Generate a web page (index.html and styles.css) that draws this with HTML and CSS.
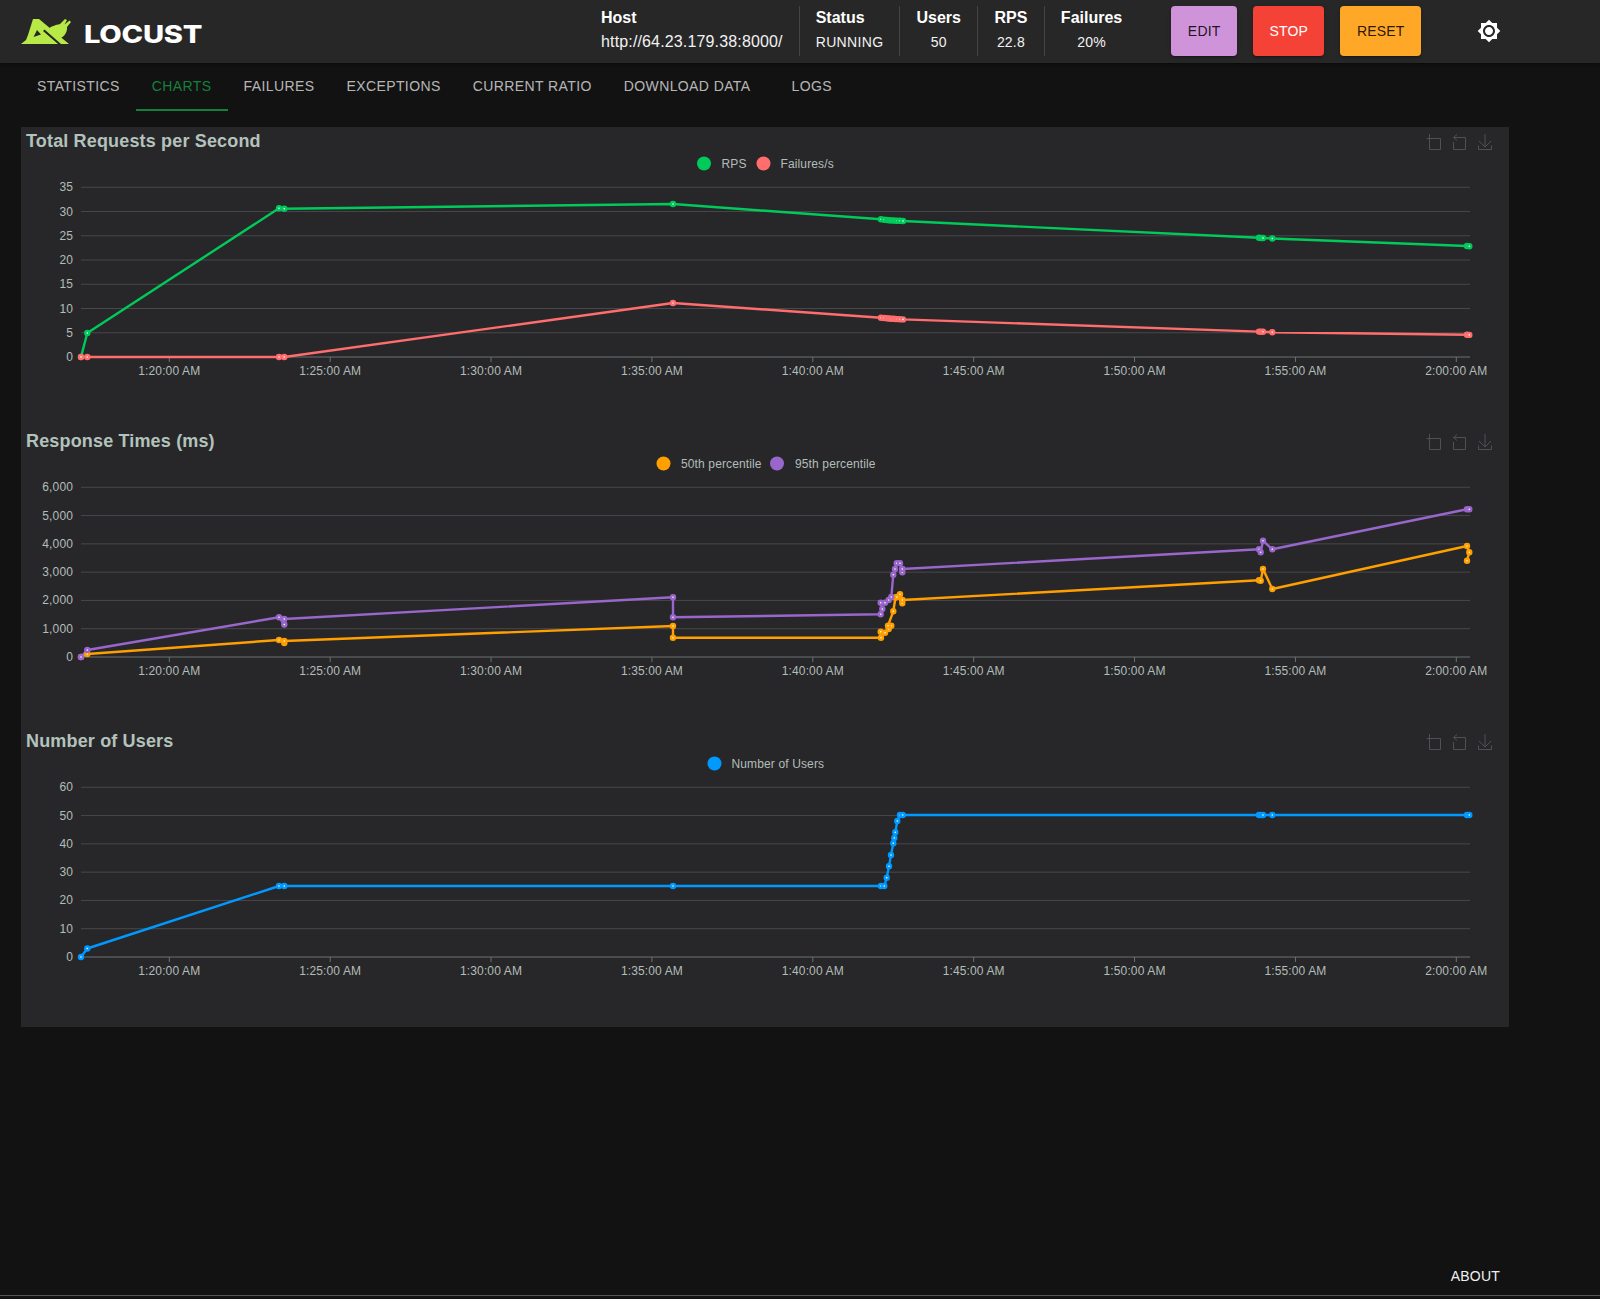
FILE: index.html
```html
<!DOCTYPE html>
<html lang="en">
<head>
<meta charset="utf-8">
<title>Locust</title>
<link rel="stylesheet" href="styles.css">
</head>
<body>
<header class="topbar">
  <a class="brand">
    <svg class="brand-mark" viewBox="18 14 60 34" width="60" height="34">
      <path class="mark" fill-rule="evenodd" d="M33 19H39L69 44H21L26 40 28 35ZM37 30 33.5 37 41 34.5ZM43 31 58 44H61L44.5 29.5Z"/>
      <path class="mark" d="M47 30C51 26 56 25 60 24L65 19 67 20 64.5 24.5 69.5 20.5 71 22 67 27C67.5 31 65 36 61 38Z"/>
    </svg>
    <span class="brand-name">LOCUST</span>
  </a>
  <div class="stats">
    <div class="stat stat-host"><b>Host</b><span class="host-url">http://64.23.179.38:8000/</span></div>
    <div class="stat stat-status"><b>Status</b><span>RUNNING</span></div>
    <div class="stat"><b>Users</b><span>50</span></div>
    <div class="stat stat-rps"><b>RPS</b><span>22.8</span></div>
    <div class="stat stat-last"><b>Failures</b><span>20%</span></div>
  </div>
  <div class="actions">
    <button class="btn btn-edit">EDIT</button>
    <button class="btn btn-stop">STOP</button>
    <button class="btn btn-reset">RESET</button>
  </div>
  <svg class="theme" viewBox="0 0 24 24" width="24" height="24"><path d="M20 8.69V4h-4.69L12 .69 8.69 4H4v4.69L.69 12 4 15.31V20h4.69L12 23.31 15.31 20H20v-4.69L23.31 12 20 8.69zM12 18c-3.31 0-6-2.69-6-6s2.69-6 6-6 6 2.69 6 6-2.69 6-6 6zm0-10c-2.21 0-4 1.79-4 4s1.79 4 4 4 4-1.79 4-4-1.79-4-4-4z"/></svg>
</header>
<nav class="tabs">
  <a class="tab">STATISTICS</a>
  <a class="tab tab-active">CHARTS</a>
  <a class="tab">FAILURES</a>
  <a class="tab">EXCEPTIONS</a>
  <a class="tab">CURRENT RATIO</a>
  <a class="tab">DOWNLOAD DATA</a>
  <a class="tab tab-logs">LOGS</a>
</nav>
<main class="main">
  <section class="panel" id="panel"></section>
</main>
<footer class="footer"><a class="about">ABOUT</a></footer>
<script src="charts.js"></script>
</body>
</html>
```
FILE: styles.css
```css
* { box-sizing: border-box; }
html, body { margin: 0; height: 100%; }
body {
  display: flex;
  flex-direction: column;
  min-height: 1299px;
  background: #121212;
  color: #fff;
  font-family: "Liberation Sans", Arial, sans-serif;
  font-size: 14px;
}
.topbar {
  display: flex;
  align-items: center;
  height: 63px;
  flex: none;
  padding-bottom: 1px;
  background: #272727;
  box-shadow: 0 1px 3px rgba(0,0,0,.5);
}
.brand { display: flex; align-items: center; width: 601px; padding: 7px 0 0 18px; }
.brand-mark { display: block; flex: none; margin-top: -7px; }
.brand-name {
  margin-left: 6px;
  font-family: Inter, "Liberation Sans", sans-serif;
  font-weight: 800;
  font-size: 24px;
  letter-spacing: -.2px;
  transform: scaleX(1.21);
  transform-origin: left center;
}
.stats { display: flex; height: 50px; }
.stat {
  display: flex;
  flex-direction: column;
  align-items: center;
  gap: 4px;
  padding: 2px 16px 0;
  border-right: 1px solid #444;
}
.stat b { font-size: 16px; line-height: 20px; }
.stat span { font-size: 14px; line-height: 20px; letter-spacing: .2px; color: #f2f2f2; }
.stat-host { align-items: flex-start; padding-left: 0; }
.stat-status { align-items: flex-start; }
.stat-status span { letter-spacing: .35px; }
.stat-rps { padding: 2px 16.5px 0; }
.stat-last { border-right: 0; }
.stat .host-url { font-size: 16px; letter-spacing: .15px; }
.actions { display: flex; gap: 16px; margin-left: 33px; }
.btn {
  height: 50px;
  padding: 0 16px;
  border: 0;
  border-radius: 4px;
  font: 14px "Liberation Sans", Arial, sans-serif;
  letter-spacing: .2px;
  color: rgba(0,0,0,.87);
  box-shadow: 0 3px 1px -2px rgba(0,0,0,.2), 0 2px 2px rgba(0,0,0,.14), 0 1px 5px rgba(0,0,0,.12);
}
.btn-edit { width: 66px; background: #ce93d8; }
.btn-stop { width: 71px; background: #f44336; color: #fff; }
.btn-reset { width: 81px; background: #ffa726; }
.theme { margin-left: 56px; fill: #fff; flex: none; }
.tabs { display: flex; flex: none; height: 48px; padding-left: 21px; }
.tab {
  display: flex;
  align-items: center;
  padding: 0 16px;
  letter-spacing: .4px;
  color: rgba(255,255,255,.7);
  border-bottom: 2px solid transparent;
}
.tab-active { color: #15803d; border-bottom-color: #15803d; }
.tab-logs { margin-left: 9px; }
.main { flex: 1; padding: 16px 0 0 21px; }
.panel { width: 1488px; background: #27272a; }
.chart { display: block; width: 1488px; height: 300px; }
.chart text { font-family: "Liberation Sans", Arial, sans-serif; font-size: 12px; letter-spacing: .13px; fill: #b3bdb8; }
.chart .title { font-size: 18px; font-weight: 700; letter-spacing: .16px; fill: #b3c3bc; }
.chart .grid { stroke: #48484c; stroke-width: 1; }
.chart .axis { stroke: #6a726e; stroke-width: 1; }
.chart .tool { fill: none; stroke: #505054; stroke-width: 1; }
.chart .line { fill: none; stroke-width: 2.4; stroke-linejoin: round; }
.chart .dot { fill: #fff; stroke-width: 2.4; }
.footer {
  display: flex;
  justify-content: flex-end;
  align-items: center;
  flex: none;
  height: 40px;
  padding: 0 100px 6px 0;
  position: relative;
}
.footer::after {
  content: "";
  position: absolute;
  left: 0;
  right: 0;
  bottom: 3px;
  height: 1px;
  background: #555;
}
.about { color: #f0f0f0; letter-spacing: .2px; }
.mark { fill: #b7ea46; }
```
FILE: charts.js
```js
var NS = "http://www.w3.org/2000/svg";

var TICKS = ["1:20:00 AM", "1:25:00 AM", "1:30:00 AM", "1:35:00 AM", "1:40:00 AM",
             "1:45:00 AM", "1:50:00 AM", "1:55:00 AM", "2:00:00 AM"];

/* Points are [x, y] in page pixels: the chart frames below share that system. */
var CHARTS = [
  {
    title: "Total Requests per Second", top: 127,
    yLabels: ["0", "5", "10", "15", "20", "25", "30", "35"],
    legend: [
      { name: "RPS", dot: 704, text: 721.5, color: "#00ca5a" },
      { name: "Failures/s", dot: 763.5, text: 780.5, color: "#ff6d6d" }
    ],
    series: [
      { color: "#00ca5a", points: [[81,357],[87.3,333],[279,208.3],[284.3,208.7],[673,204],[881,219.3],[884,219.7],[886.7,220],[889,220.2],[891,220.4],[893.3,220.5],[895.3,220.6],[897.3,220.7],[900,220.8],[903,221],[1259,237.8],[1261,238],[1263,238],[1272.3,238.5],[1467,246],[1469.3,246.2]] },
      { color: "#ff6d6d", points: [[81,357],[87.3,357],[279,357],[284.3,357],[673,303],[881,317.7],[884,318],[886.7,318.3],[889,318.5],[891,318.7],[893.3,318.8],[895.3,319],[897.3,319.1],[900,319.2],[903,319.4],[1259,331.6],[1261,331.8],[1263,331.8],[1272.3,332.2],[1467,334.7],[1469.3,334.9]] }
    ]
  },
  {
    title: "Response Times (ms)", top: 427,
    yLabels: ["0", "1,000", "2,000", "3,000", "4,000", "5,000", "6,000"],
    legend: [
      { name: "50th percentile", dot: 663.5, text: 681, color: "#ff9f00" },
      { name: "95th percentile", dot: 777, text: 795, color: "#9966cc" }
    ],
    series: [
      { color: "#ff9f00", points: [[81,657],[87.3,654],[279,640],[284.3,643],[284.3,641],[673,626],[673,637.7],[881,637.7],[880.7,631.7],[885,632.7],[888.7,629],[891.3,625.7],[888,625.7],[893.3,611.3],[895.5,597.5],[897,597],[900,594.3],[902.3,600],[902.3,603.3],[902.3,600],[1259,580.3],[1260.7,580.7],[1263,569],[1272.3,589],[1467,546],[1469.3,552.3],[1467,560.7]] },
      { color: "#9966cc", points: [[81,657],[87.3,650],[279,617.3],[284.3,624.5],[284.3,619],[673,597.3],[673,617.3],[880.7,614.3],[882.3,609],[880.7,602.7],[885,602.7],[888.7,600],[891.3,597],[893.3,574.7],[895,569],[896.7,563.3],[900,563.3],[902.3,569],[902.3,572.3],[902.3,569],[1259,549.3],[1260.7,552.3],[1263,540.7],[1272.3,549.3],[1467,509.3],[1469.3,509.3]] }
    ]
  },
  {
    title: "Number of Users", top: 727,
    yLabels: ["0", "10", "20", "30", "40", "50", "60"],
    legend: [
      { name: "Number of Users", dot: 714.5, text: 731.5, color: "#0099ff" }
    ],
    series: [
      { color: "#0099ff", points: [[81,957],[87.3,948.5],[279,886],[284.3,886],[673,886],[881,886],[884.3,886],[886.7,877.7],[889,866.3],[891,855],[893.3,843.3],[894.3,838],[895.3,832.3],[897.3,821],[900,815],[902.7,815],[1259,815],[1260.7,815],[1263,815],[1272.3,815],[1467,815],[1469.3,815]] }
    ]
  }
];

function el(parent, name, attrs, text) {
  var node = document.createElementNS(NS, name);
  for (var key in attrs) node.setAttribute(key, attrs[key]);
  if (text !== undefined) node.textContent = text;
  parent.appendChild(node);
  return node;
}

function drawChart(panel, chart) {
  var top = chart.top;
  var svg = el(panel, "svg", { "class": "chart", viewBox: "21 " + top + " 1488 300" });
  var bottom = top + 230;
  var plotTop = top + 60.3;
  var count = chart.yLabels.length - 1;

  el(svg, "text", { "class": "title", x: 26, y: top + 20 }, chart.title);

  chart.yLabels.forEach(function (label, i) {
    var y = bottom - (bottom - plotTop) * i / count;
    if (i > 0) el(svg, "line", { "class": "grid", x1: 81, x2: 1470, y1: y, y2: y });
    el(svg, "text", { x: 73, y: y + 4, "text-anchor": "end" }, label);
  });

  el(svg, "line", { "class": "axis", x1: 81, x2: 1470, y1: bottom, y2: bottom });
  TICKS.forEach(function (label, i) {
    var x = 169.3 + i * 160.875;
    el(svg, "line", { "class": "axis", x1: x, x2: x, y1: bottom, y2: bottom + 5 });
    el(svg, "text", { x: x, y: bottom + 18, "text-anchor": "middle" }, label);
  });

  chart.legend.forEach(function (item) {
    el(svg, "circle", { cx: item.dot, cy: top + 36.5, r: 7, fill: item.color });
    el(svg, "text", { x: item.text, y: top + 40.5 }, item.name);
  });

  var t = top + 7;
  el(svg, "path", { "class": "tool", d: "M1426.5 " + (t + 4.5) + "H1440.5V" + (t + 15.5) + "H1429.5V" + t });
  el(svg, "path", { "class": "tool", d: "M1453.5 " + (t + 3.5) + "H1465.5V" + (t + 15.5) + "H1453.5V" + (t + 8) + "M1457 " + (t + 0.5) + "L1453.5 " + (t + 3.5) + "L1457 " + (t + 6.5) });
  el(svg, "path", { "class": "tool", d: "M1485 " + t + "V" + (t + 13) + "M1479 " + (t + 7) + "L1485 " + (t + 13) + "L1491 " + (t + 7) + "M1478.5 " + (t + 11.5) + "V" + (t + 15.5) + "H1491.5V" + (t + 11.5) });

  chart.series.forEach(function (s) {
    el(svg, "polyline", {
      "class": "line", stroke: s.color,
      points: s.points.map(function (p) { return p.join(","); }).join(" ")
    });
  });
  chart.series.forEach(function (s) {
    s.points.forEach(function (p) {
      el(svg, "circle", { "class": "dot", cx: p[0], cy: p[1], r: 2, stroke: s.color });
    });
  });
}

var panel = document.getElementById("panel");
CHARTS.forEach(function (chart) { drawChart(panel, chart); });
```
